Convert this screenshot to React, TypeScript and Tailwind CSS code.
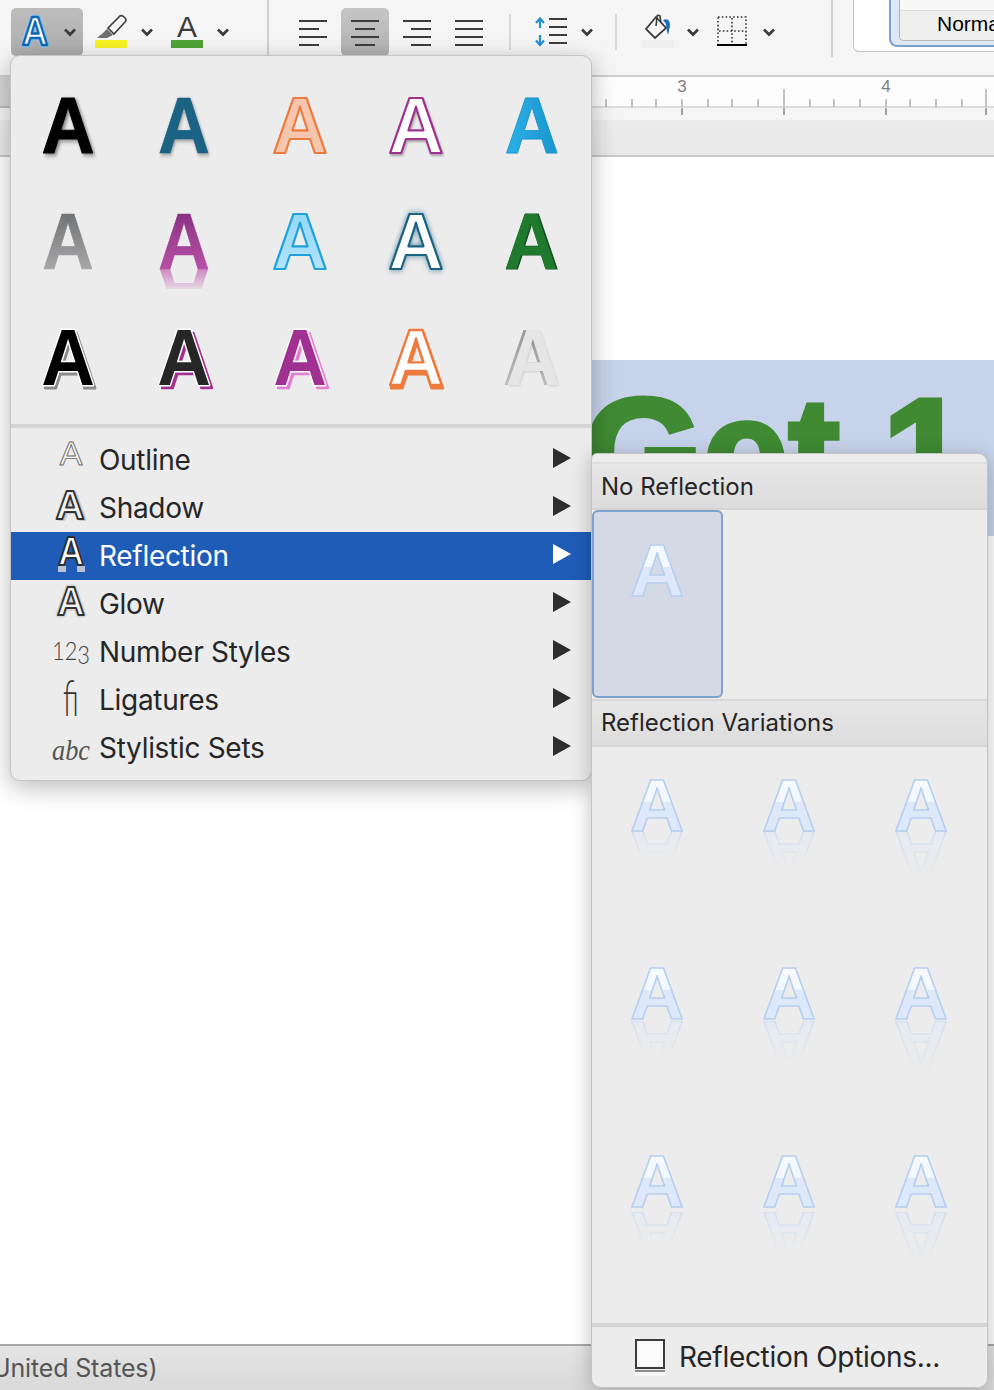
import React from "react";

type Layer = { dx?: number; dy?: number; fill: string; stroke?: string; sw?: number; op?: number; filter?: string; po?: boolean };

const FONT = "'Liberation Sans', Arial, sans-serif";

function Glyph({ layers, w, h, cx, base, size, sx = 1, bold = true }: { layers: Layer[]; w: number; h: number; cx: number; base: number; size: number; sx?: number; bold?: boolean }) {
  return (
    <svg width={w} height={h} className="block shrink-0">
      {layers.map((l, i) => (
        <g key={i} transform={`translate(${cx + (l.dx ?? 0)} ${base + (l.dy ?? 0)}) scale(${sx} 1)`} opacity={l.op ?? 1} style={l.filter ? { filter: l.filter } : undefined}>
          <text textAnchor="middle" fontFamily={FONT} fontWeight={bold ? 700 : 400} fontSize={size} fill={l.fill} stroke={l.stroke ?? "none"} strokeWidth={l.sw ?? 0} strokeLinejoin="round" style={l.po ? { paintOrder: "stroke" } : undefined}>A</text>
        </g>
      ))}
    </svg>
  );
}

const GALLERY: { layers: Layer[]; extra?: boolean; sx?: number }[] = [
  { sx: 0.92, layers: [{ fill: "#000", stroke: "#000", sw: 1, filter: "drop-shadow(2px 2px 2px rgba(0,0,0,.45))" }] },
  { layers: [{ fill: "#1b6384", stroke: "#1b6384", sw: 0.6, filter: "drop-shadow(1px 2px 2px rgba(0,0,0,.35))" }] },
  { sx: 0.96, layers: [{ fill: "#f5c5ad", stroke: "#ee7b3e", sw: 2.2 }] },
  { sx: 0.96, layers: [{ fill: "#fff", stroke: "#a03193", sw: 2.2, filter: "drop-shadow(1px 2px 1px rgba(0,0,0,.3))" }] },
  { sx: 0.94, layers: [{ fill: "url(#gBlue)", stroke: "#1a94cd", sw: 0.8 }] },
  { layers: [{ fill: "url(#gGrey)", stroke: "url(#gGrey)", sw: 0.4 }] },
  { layers: [{ fill: "url(#gPurple)", stroke: "url(#gPurple)", sw: 0.4 }], extra: true },
  { sx: 0.96, layers: [{ fill: "url(#gSky)", stroke: "#1fa2dc", sw: 2.2 }] },
  { sx: 0.96, layers: [{ fill: "#fff", stroke: "#1b6384", sw: 2.2, filter: "drop-shadow(0 0 3px rgba(27,99,132,.7))" }] },
  { sx: 0.94, layers: [{ fill: "#134f1e", stroke: "#134f1e", sw: 1.2 }, { dx: -1, fill: "#1f7a2e" }] },
  { sx: 0.93, layers: [{ dx: 2, dy: 3, fill: "#8a8a8a", stroke: "#8a8a8a", sw: 3 }, { fill: "#000", stroke: "#fff", sw: 3, po: true }] },
  { sx: 0.93, layers: [{ dx: 3, dy: 3, fill: "#a03193", stroke: "#a03193", sw: 2.5 }, { fill: "#262626", stroke: "#fff", sw: 3, po: true }] },
  { sx: 0.93, layers: [{ dx: 3, dy: 3, fill: "#e07fd4", stroke: "#e07fd4", sw: 2.5 }, { fill: "#a03193", stroke: "#fff", sw: 3, po: true }] },
  { sx: 0.96, layers: [{ dx: 1, dy: 3, fill: "#ee7b3e", stroke: "#ee7b3e", sw: 3 }, { fill: "#fff", stroke: "#ee7b3e", sw: 2.4 }] },
  { sx: 0.94, layers: [{ dx: -2, fill: "url(#gPale)" }, { dx: 1, fill: "#e6e6e6", filter: "drop-shadow(1px 1px 1px rgba(0,0,0,.12))" }] },
];

function GalleryCell({ item }: { item: (typeof GALLERY)[number] }) {
  const sx = item.sx ?? 0.9;
  return (
    <svg width={116} height={116} className="block">
      {item.extra && (
        <g mask="url(#mPurple)">
          <g transform="translate(57 87) scale(.9 -1)">
            <text textAnchor="middle" fontFamily={FONT} fontWeight={700} fontSize={80} fill="#bf55ad">A</text>
          </g>
        </g>
      )}
      {item.layers.map((l, i) => (
        <g key={i} transform={`translate(${57 + (l.dx ?? 0)} ${87 + (l.dy ?? 0)}) scale(${sx} 1)`} style={l.filter ? { filter: l.filter } : undefined}>
          <text textAnchor="middle" fontFamily={FONT} fontWeight={700} fontSize={80} fill={l.fill} stroke={l.stroke ?? "none"} strokeWidth={l.sw ?? 0} strokeLinejoin="round" style={l.po ? { paintOrder: "stroke" } : undefined}>A</text>
        </g>
      ))}
    </svg>
  );
}

function ReflectA({ gap, len, id }: { gap: number; len: number; id: string }) {
  const base = 84;
  return (
    <svg width={132} height={188} className="block">
      <mask id={id} maskUnits="userSpaceOnUse" x={0} y={0} width={132} height={188}>
        <rect x={0} y={base + gap} width={132} height={len} fill="url(#gFade)" />
      </mask>
      <g mask={`url(#${id})`}>
        <g transform={`translate(65 ${base + gap}) scale(1 -1)`}>
          <text textAnchor="middle" fontFamily={FONT} fontWeight={700} fontSize={75} fill="#dde8fb" stroke="#b5cff0" strokeWidth={1.6} strokeLinejoin="round">A</text>
        </g>
      </g>
      <text x={65} y={base} textAnchor="middle" fontFamily={FONT} fontWeight={700} fontSize={75} fill="url(#gRefl)" stroke="#b5cff0" strokeWidth={1.6} strokeLinejoin="round">A</text>
    </svg>
  );
}

const REFL = [
  [0, 27], [0, 37], [0, 49],
  [2, 35], [2, 41], [2, 52],
  [5, 34], [5, 40], [5, 52],
];

function Chev({ className }: { className: string }) {
  return (
    <svg width={12} height={9} viewBox="0 0 12 9" className={`block shrink-0 ${className}`}>
      <polyline points="1,1.5 6,6.5 11,1.5" fill="none" stroke="#3c3c3c" strokeWidth={2.7} />
    </svg>
  );
}

function AlignIcon({ rows }: { rows: [number, number][] }) {
  return (
    <svg width={28} height={26} className="block">
      {rows.map(([x, w], i) => (
        <rect key={i} x={x} y={i * 8} width={w} height={2} fill="#3c3c3c" />
      ))}
    </svg>
  );
}

function Arrow({ white }: { white?: boolean }) {
  return (
    <svg width={18} height={20} className="block shrink-0 mb-[4px]">
      <polygon points="0,0 18,10 0,20" fill={white ? "#fff" : "#2d2d2d"} />
    </svg>
  );
}

const MENU: { label: string; icon: React.ReactNode }[] = [
  {
    label: "Outline",
    icon: <Glyph w={42} h={48} cx={21} base={29} size={34} layers={[{ fill: "#f6f6f6", stroke: "#6a6a6a", sw: 0.9 }]} bold={false} />,
  },
  {
    label: "Shadow",
    icon: <Glyph w={42} h={48} cx={20} base={35} size={41} sx={0.98} layers={[{ dx: 2, dy: 1, fill: "#c9c9c9", stroke: "#c9c9c9", sw: 2 }, { fill: "#f2f2f2", stroke: "#333", sw: 2 }]} />,
  },
  {
    label: "Reflection",
    icon: (
      <svg width={42} height={48} className="block shrink-0">
        <rect x={8} y={34} width={8} height={6} fill="#b8c2d4" />
        <rect x={27} y={34} width={8} height={6} fill="#b8c2d4" />
        <text transform="translate(21 33) scale(.88 1)" textAnchor="middle" fontFamily={FONT} fontWeight={700} fontSize={41} fill="#fff" stroke="#2e2e2e" strokeWidth={2} strokeLinejoin="round">A</text>
      </svg>
    ),
  },
  {
    label: "Glow",
    icon: <Glyph w={42} h={48} cx={21} base={35} size={41} sx={0.94} layers={[{ fill: "#d4d4d0", stroke: "#d4d4d0", sw: 5 }, { fill: "#f2f2f2", stroke: "#333", sw: 2 }]} />,
  },
  {
    label: "Number Styles",
    icon: (
      <svg width={42} height={48} className="block shrink-0">
        <text x={2} y={32} textLength={38} lengthAdjust="spacingAndGlyphs" fontFamily="Lato, sans-serif" fontWeight={300} fontSize={26} fill="#444">
          12<tspan dy={4}>3</tspan>
        </text>
      </svg>
    ),
  },
  {
    label: "Ligatures",
    icon: (
      <svg width={42} height={48} className="block shrink-0">
        <text transform="translate(21 40) scale(1.05 1.75)" textAnchor="middle" fontFamily="Lato, sans-serif" fontWeight={300} fontSize={28} fill="#333">ﬁ</text>
      </svg>
    ),
  },
  {
    label: "Stylistic Sets",
    icon: (
      <svg width={42} height={48} className="block shrink-0">
        <text x={2} y={36} textLength={38} lengthAdjust="spacingAndGlyphs" fontFamily="'Liberation Serif', serif" fontStyle="italic" fontSize={29} fill="#555">abc</text>
      </svg>
    ),
  },
];

const TICKS = [606, 632, 656, 682, 708, 732, 758, 810, 834, 860, 886, 910, 936, 962];
const UNDER = [682, 784, 886, 986];

export default function App() {
  return (
    <div className="relative w-[994px] h-[1390px] overflow-hidden flex flex-col bg-white font-['Inter',sans-serif]">
      <svg width={0} height={0} className="absolute">
        <defs>
          <linearGradient id="gBlue" x1="0" y1="0" x2="1" y2="0">
            <stop offset="0" stopColor="#2cb1e6" /><stop offset="1" stopColor="#1a94cd" />
          </linearGradient>
          <linearGradient id="gGrey" x1="0" y1="0" x2="0" y2="1">
            <stop offset="0" stopColor="#5f6163" /><stop offset="1" stopColor="#b9b9bb" />
          </linearGradient>
          <linearGradient id="gPurple" x1="0" y1="0" x2="0" y2="1">
            <stop offset="0" stopColor="#7f2a78" /><stop offset="1" stopColor="#c259b0" />
          </linearGradient>
          <linearGradient id="gSky" x1="0" y1="0" x2="0" y2="1">
            <stop offset="0" stopColor="#8bd5f7" /><stop offset="1" stopColor="#bbe6fa" />
          </linearGradient>
          <linearGradient id="gPale" x1="0" y1="0" x2="0" y2="1">
            <stop offset="0" stopColor="#8a8a8a" /><stop offset="1" stopColor="#c9c9c9" />
          </linearGradient>
          <linearGradient id="gRefl" x1="0" y1="0" x2="0" y2="1">
            <stop offset="0" stopColor="#fbfdff" /><stop offset=".47" stopColor="#f2f7ff" /><stop offset=".47" stopColor="#dde8fb" /><stop offset="1" stopColor="#dde8fb" />
          </linearGradient>
          <linearGradient id="gFade" x1="0" y1="0" x2="0" y2="1">
            <stop offset="0" stopColor="#777" /><stop offset="1" stopColor="#000" />
          </linearGradient>
          <linearGradient id="gFadeP" x1="0" y1="0" x2="0" y2="1">
            <stop offset="0" stopColor="#aaa" /><stop offset="1" stopColor="#222" />
          </linearGradient>
          <mask id="mPurple" maskUnits="userSpaceOnUse" x={0} y={0} width={116} height={116}>
            <rect x={0} y={87} width={116} height={20} fill="url(#gFadeP)" />
          </mask>
        </defs>
      </svg>

      {/* toolbar */}
      <div className="h-[75px] shrink-0 bg-[#f5f5f5] flex items-start pl-[11px] overflow-hidden">
        <div className="w-[72px] h-[48px] mt-[8px] shrink-0 rounded-[5px] bg-gradient-to-b from-[#bdbdbd] to-[#acacac] flex items-center relative">
          <Glyph w={52} h={48} cx={24} base={37} size={40} sx={0.9} layers={[{ fill: "#8cc4ee", stroke: "#8cc4ee", sw: 5 }, { fill: "#fff", stroke: "#0f68b4", sw: 2.4 }]} />
          <Chev className="ml-[1px] mt-[1px]" />
        </div>
        <svg width={32} height={48} className="block shrink-0 ml-[12px] mt-[8px]">
          <path d="M2 30 L8 25 L12 21 L18 27 L12 30 Z" fill="#6f6f6f" />
          <path d="M13 20 L25 8 Q27 7 29 9 L30 10 Q32 12 30 14 L19 26 Z" fill="#f5f5f5" stroke="#3c3c3c" strokeWidth={1.6} />
          <rect x={0} y={32} width={32} height={8} fill="#f8f325" />
        </svg>
        <Chev className="ml-[14px] mt-[28px]" />
        <svg width={32} height={48} className="block shrink-0 ml-[18px] mt-[8px]">
          <text x={16} y={29} textAnchor="middle" fontFamily={FONT} fontSize={30} fill="#3c3c3c">A</text>
          <rect x={0} y={32} width={32} height={8} fill="#4fa335" />
        </svg>
        <Chev className="ml-[14px] mt-[28px]" />
        <div className="w-[2px] h-[56px] ml-[38px] shrink-0 bg-[#d0d0d0]" />
        <div className="ml-[20px] mt-[8px] flex gap-[4px] shrink-0">
          <div className="w-[48px] h-[48px] flex items-center justify-center pt-[2px]"><AlignIcon rows={[[0, 28], [0, 20], [0, 28], [0, 20]]} /></div>
          <div className="w-[48px] h-[48px] rounded-[5px] bg-gradient-to-b from-[#c6c6c6] to-[#b0b0b0] flex items-center justify-center pt-[2px]"><AlignIcon rows={[[0, 28], [4, 20], [0, 28], [4, 20]]} /></div>
          <div className="w-[48px] h-[48px] flex items-center justify-center pt-[2px]"><AlignIcon rows={[[0, 28], [8, 20], [0, 28], [8, 20]]} /></div>
          <div className="w-[48px] h-[48px] flex items-center justify-center pt-[2px]"><AlignIcon rows={[[0, 28], [0, 28], [0, 28], [0, 28]]} /></div>
        </div>
        <div className="w-[2px] h-[36px] ml-[16px] mt-[14px] shrink-0 bg-[#d8d8d8]" />
        <svg width={32} height={32} className="block shrink-0 ml-[24px] mt-[16px]">
          <path d="M5 3 V12 M1 7 L5 2.5 L9 7 M5 19 V29 M1 24.5 L5 29 L9 24.5" stroke="#2390d2" strokeWidth={2.2} fill="none" />
          <rect x={14} y={2} width={18} height={2} fill="#3c3c3c" />
          <rect x={14} y={10} width={18} height={2} fill="#3c3c3c" />
          <rect x={14} y={18} width={18} height={2} fill="#3c3c3c" />
          <rect x={14} y={26} width={18} height={2} fill="#3c3c3c" />
        </svg>
        <Chev className="ml-[14px] mt-[28px]" />
        <div className="w-[2px] h-[36px] ml-[22px] mt-[14px] shrink-0 bg-[#d8d8d8]" />
        <svg width={32} height={48} className="block shrink-0 ml-[25px] mt-[8px]">
          <path d="M14 9 L4 21 L13 30 L24 20 Z" fill="#f8f8f8" stroke="#3c3c3c" strokeWidth={1.8} />
          <path d="M14 18 L15 9 Q15 6 18 8 L19 15" fill="none" stroke="#3c3c3c" strokeWidth={1.6} />
          <path d="M21 12 Q28 9 28 18 L26 27 Q24 20 24 16 Z" fill="#1f6fb8" />
          <rect x={0} y={32} width={32} height={8} fill="#efefef" />
        </svg>
        <Chev className="ml-[13px] mt-[28px]" />
        <svg width={30} height={32} className="block shrink-0 ml-[18px] mt-[16px]">
          <rect x={1} y={1} width={28} height={28} fill="none" stroke="#333" strokeWidth={1.6} strokeDasharray="1.6 2.2" />
          <path d="M15 2 V28 M2 15 H28" stroke="#333" strokeWidth={1.6} strokeDasharray="1.6 2.2" fill="none" />
          <rect x={0} y={28} width={30} height={2} fill="#000" />
        </svg>
        <Chev className="ml-[16px] mt-[28px]" />
        <div className="w-[2px] h-[57px] ml-[56px] shrink-0 bg-[#d0d0d0]" />
        <div className="ml-[20px] w-[200px] h-[52px] shrink-0 bg-white border border-t-0 border-[#c4c4c4] rounded-b-[6px] pl-[35px]">
          <div className="h-[47px] bg-[#dfe7f2] border-l-2 border-b-2 border-[#7c9fcb] rounded-bl-[8px] pl-[8px]">
            <div className="h-[41px] border-l border-b border-[#b5b5b5] rounded-bl-[5px] overflow-hidden">
              <div className="h-[10px] bg-[#f7f7f7]" />
              <div className="h-[31px] border-t border-[#dedede] bg-[#efefef] pl-[37px] pt-[1px] text-[21px] leading-[24px] text-black font-['Liberation_Sans',sans-serif]">Normal</div>
            </div>
          </div>
        </div>
      </div>

      {/* ruler */}
      <div className="h-[45px] shrink-0 flex flex-col border-t-2 border-[#d0d0d0]">
        <div className="flex-1 flex">
          <div className="w-[60px] shrink-0 bg-[#d6d6d6] border-b-2 border-[#bdbdbd]" />
          <svg width={934} height={31} viewBox="60 76 934 31" className="block flex-1 bg-[#fdfdfd]">
            <rect x={60} y={105} width={934} height={2} fill="#dcdcdc" />
            {TICKS.map((x) => (<rect key={x} x={x - 0.7} y={98} width={1.4} height={8} fill="#a8a8a8" />))}
            <rect x={783.3} y={88} width={1.4} height={18} fill="#a8a8a8" />
            <rect x={985.3} y={88} width={1.4} height={18} fill="#a8a8a8" />
            <text x={682} y={91} textAnchor="middle" fontFamily={FONT} fontSize={17} fill="#808080">3</text>
            <text x={886} y={91} textAnchor="middle" fontFamily={FONT} fontSize={17} fill="#808080">4</text>
          </svg>
        </div>
        <svg width={994} height={12} viewBox="0 107 994 12" className="block bg-[#f5f5f5] shrink-0">
          {UNDER.map((x) => (<rect key={x} x={x - 0.8} y={107} width={1.6} height={7} fill="#8c8c8c" />))}
        </svg>
      </div>
      <div className="h-[37px] shrink-0 bg-gradient-to-b from-[#ececec] to-[#e8e8e8] border-b-2 border-[#c8c8c8]" />

      {/* document */}
      <div className="flex-1 min-h-0 pt-[203px]">
        <div className="ml-[11px] h-[176px] bg-[#c7d3ea] overflow-hidden pl-[572px] pt-[16px]">
          <div className="font-['Liberation_Sans',sans-serif] font-bold text-[154px] leading-none whitespace-nowrap text-[#3f8a33] [-webkit-text-stroke:5px_#3f8a33]">Get 1</div>
        </div>
      </div>

      {/* status bar */}
      <div className="h-[46px] shrink-0 border-t-2 border-[#a8a8a8] bg-gradient-to-b from-[#e4e4e4] to-[#d9d9d9] overflow-hidden">
        <div className="-ml-[8px] text-[25px] leading-[44px] tracking-[-0.15px] text-[#555] whitespace-nowrap">United States)</div>
      </div>

      {/* font effects menu */}
      <div className="absolute left-[10px] top-[55px] w-[582px] h-[726px] bg-[#ececec] border border-[#c4c4c4] rounded-[10px] shadow-[0_6px_24px_rgba(0,0,0,0.28)] overflow-hidden">
        <div className="grid grid-cols-[repeat(5,116px)] content-start pt-[10px] h-[368px]">
          {GALLERY.map((g, i) => (<GalleryCell key={i} item={g} />))}
        </div>
        <div className="h-[4px] bg-[#d4d4d4]" />
        <div className="pt-[8px]">
          {MENU.map((m) => {
            const active = m.label === "Reflection";
            return (
              <div key={m.label} className={`h-[48px] flex items-center pl-[39px] pr-[20px] ${active ? "bg-[#1f5cb8] text-white" : "text-[#262626]"}`}>
                {m.icon}
                <span className="ml-[7px] flex-1 text-[28px] leading-[47px] tracking-[-0.3px]">{m.label}</span>
                <Arrow white={active} />
              </div>
            );
          })}
        </div>
      </div>

      {/* reflection submenu */}
      <div className="absolute left-[591px] top-[453px] w-[397px] h-[935px] bg-[#ececec] border border-[#c4c4c4] rounded-[10px] rounded-tl-[6px] shadow-[0_4px_20px_rgba(0,0,0,0.25)] flex flex-col overflow-hidden">
        <div className="h-[8px] shrink-0" />
        <div className="h-[2px] shrink-0 bg-[#dedede]" />
        <div className="h-[46px] shrink-0 bg-gradient-to-b from-[#e7e7e7] to-[#dcdcdc] border-b-2 border-[#d4d4d4] pl-[9px] text-[24px] leading-[46px] text-[#262626]">No Reflection</div>
        <div className="h-[188px] shrink-0">
          <div className="w-[131px] h-[188px] bg-[#d3dae5] border-2 border-[#7fa1cd] rounded-[6px]">
            <svg width={126} height={100} className="block">
              <text x={63} y={84} textAnchor="middle" fontFamily={FONT} fontWeight={700} fontSize={75} fill="url(#gRefl)" stroke="#b5cff0" strokeWidth={1.6} strokeLinejoin="round">A</text>
            </svg>
          </div>
        </div>
        <div className="h-[48px] shrink-0 mt-[1px] bg-gradient-to-b from-[#e7e7e7] to-[#dcdcdc] border-y-2 border-[#d8d8d8] pl-[9px] text-[24px] leading-[44px] text-[#262626]">Reflection Variations</div>
        <div className="h-[576px] shrink-0 grid grid-cols-[repeat(3,132px)] content-start">
          {REFL.map(([gap, len], i) => (<ReflectA key={i} gap={gap} len={len} id={`rm${i}`} />))}
        </div>
        <div className="h-[4px] shrink-0 bg-[#d4d4d4]" />
        <div className="flex-1 flex items-start pl-[43px] pt-[12px]">
          <div className="shrink-0">
            <div className="w-[30px] h-[30px] bg-[#fafafa] border-2 border-[#3c3c3c]" />
            <div className="w-[30px] h-[6px] mt-[1px] bg-gradient-to-b from-[#8c8c8c] from-40% to-[#f5f5f5] to-40%" />
          </div>
          <span className="ml-[14px] text-[28px] leading-[36px] tracking-[-0.3px] text-[#262626] whitespace-nowrap">Reflection Options...</span>
        </div>
      </div>
    </div>
  );
}
